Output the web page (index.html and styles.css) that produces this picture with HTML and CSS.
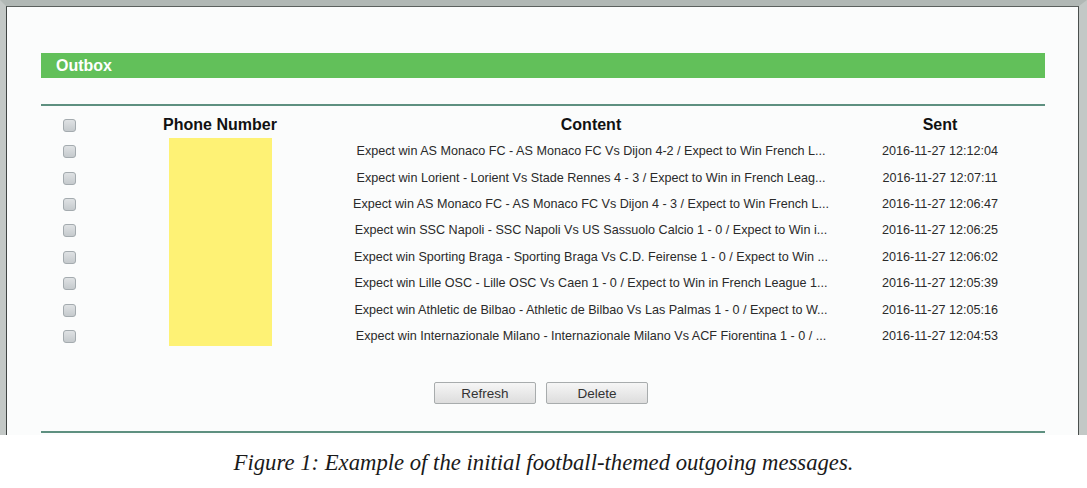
FILE: index.html
```html
<!DOCTYPE html>
<html lang="en">
<head>
    <meta charset="UTF-8">
    <meta name="viewport" content="width=device-width, initial-scale=1.0">
    <title>Outbox</title>
    <link rel="stylesheet" href="styles.css">
</head>
<body>
    <div class="frame">
        <div class="panel">
            <div class="title-bar">Outbox</div>
            <div class="rule"></div>

            <table class="outbox">
                <colgroup>
                    <col class="col-check">
                    <col class="col-phone">
                    <col class="col-content">
                    <col class="col-sent">
                </colgroup>
                <thead>
                    <tr>
                        <th><input type="checkbox" class="box"></th>
                        <th>Phone Number</th>
                        <th>Content</th>
                        <th class="sent">Sent</th>
                    </tr>
                </thead>
                <tbody>
                    <tr>
                        <td><input type="checkbox" class="box"></td>
                        <td rowspan="8" class="phone"><div class="redacted"></div></td>
                        <td class="content">Expect win AS Monaco FC - AS Monaco FC Vs Dijon 4-2 / Expect to Win French L...</td>
                        <td class="sent">2016-11-27 12:12:04</td>
                    </tr>
                    <tr>
                        <td><input type="checkbox" class="box"></td>
                        <td class="content">Expect win Lorient - Lorient Vs Stade Rennes 4 - 3 / Expect to Win in French Leag...</td>
                        <td class="sent">2016-11-27 12:07:11</td>
                    </tr>
                    <tr>
                        <td><input type="checkbox" class="box"></td>
                        <td class="content">Expect win AS Monaco FC - AS Monaco FC Vs Dijon 4 - 3 / Expect to Win French L...</td>
                        <td class="sent">2016-11-27 12:06:47</td>
                    </tr>
                    <tr>
                        <td><input type="checkbox" class="box"></td>
                        <td class="content">Expect win SSC Napoli - SSC Napoli Vs US Sassuolo Calcio 1 - 0 / Expect to Win i...</td>
                        <td class="sent">2016-11-27 12:06:25</td>
                    </tr>
                    <tr>
                        <td><input type="checkbox" class="box"></td>
                        <td class="content">Expect win Sporting Braga - Sporting Braga Vs C.D. Feirense 1 - 0 / Expect to Win ...</td>
                        <td class="sent">2016-11-27 12:06:02</td>
                    </tr>
                    <tr>
                        <td><input type="checkbox" class="box"></td>
                        <td class="content">Expect win Lille OSC - Lille OSC Vs Caen 1 - 0 / Expect to Win in French League 1...</td>
                        <td class="sent">2016-11-27 12:05:39</td>
                    </tr>
                    <tr>
                        <td><input type="checkbox" class="box"></td>
                        <td class="content">Expect win Athletic de Bilbao - Athletic de Bilbao Vs Las Palmas 1 - 0 / Expect to W...</td>
                        <td class="sent">2016-11-27 12:05:16</td>
                    </tr>
                    <tr>
                        <td><input type="checkbox" class="box"></td>
                        <td class="content">Expect win Internazionale Milano - Internazionale Milano Vs ACF Fiorentina 1 - 0 / ...</td>
                        <td class="sent">2016-11-27 12:04:53</td>
                    </tr>
                </tbody>
            </table>

            <div class="actions">
                <button class="btn">Refresh</button>
                <button class="btn">Delete</button>
            </div>

            <div class="rule rule-bottom"></div>
        </div>
    </div>

    <p class="caption">Figure 1: Example of the initial football-themed outgoing messages.</p>
</body>
</html>
```

FILE: styles.css
```css
body {
    margin: 0;
    background: #ffffff;
    font-family: "Liberation Sans", Arial, sans-serif;
    color: #222;
}

.frame {
    border-top: 6px solid #b1b8b5;
    border-left: 6px solid #c3c8c6;
    border-right: 8px solid #c3c8c6;
}

.panel {
    height: 429px;
    box-sizing: border-box;
    padding: 46px 33px 0 34px;
    background: #fbfcfc;
    border-top: 1px solid #5b605e;
    border-left: 1px solid #3f4442;
    border-right: 1px solid #4a4f4d;
}

.title-bar {
    height: 25px;
    line-height: 25px;
    padding-left: 15px;
    background: #62c05a;
    color: #fff;
    font-size: 16px;
    font-weight: bold;
}

.rule {
    height: 2px;
    margin-top: 26px;
    background: #5e9080;
}

.outbox {
    width: 100%;
    margin-top: 6px;
    border-collapse: collapse;
    table-layout: fixed;
}

.col-check { width: 57px; }
.col-phone { width: 244px; }
.col-content { width: 498px; }
.col-sent { width: 205px; }

.outbox th {
    height: 26px;
    padding: 0;
    font-size: 16px;
    font-weight: bold;
    color: #111;
    text-align: center;
}

.outbox td {
    height: 26.4px;
    padding: 0;
    font-size: 12.6px;
    color: #2a2a2a;
    text-align: center;
    vertical-align: middle;
    white-space: nowrap;
}

.outbox .sent {
    padding-right: 5px;
}

.outbox td.phone {
    vertical-align: top;
}

.redacted {
    width: 103px;
    height: 208px;
    margin: 0 auto;
    background: #fef275;
}

.box {
    appearance: none;
    width: 13px;
    height: 13px;
    margin: 0 0 0 -1px;
    vertical-align: middle;
    border: 1px solid #a4abaf;
    border-radius: 3px;
    background: linear-gradient(#dfe2e4, #c5cacd);
}

.actions {
    display: flex;
    justify-content: center;
    gap: 10px;
    margin-top: 33px;
    padding-right: 4px;
}

.btn {
    width: 102px;
    height: 22px;
    padding: 0;
    font-family: "Liberation Sans", Arial, sans-serif;
    font-size: 13.5px;
    color: #333;
    background: linear-gradient(#f6f6f6, #dddddd);
    border: 1px solid #a8acad;
    border-radius: 2px;
}

.rule-bottom {
    margin-top: 27px;
    height: 2px;
}

.caption {
    margin: 15px 0 0;
    text-align: center;
    font-family: "Liberation Serif", "Times New Roman", serif;
    font-style: italic;
    font-size: 22.7px;
    color: #1a1a1a;
}
```
